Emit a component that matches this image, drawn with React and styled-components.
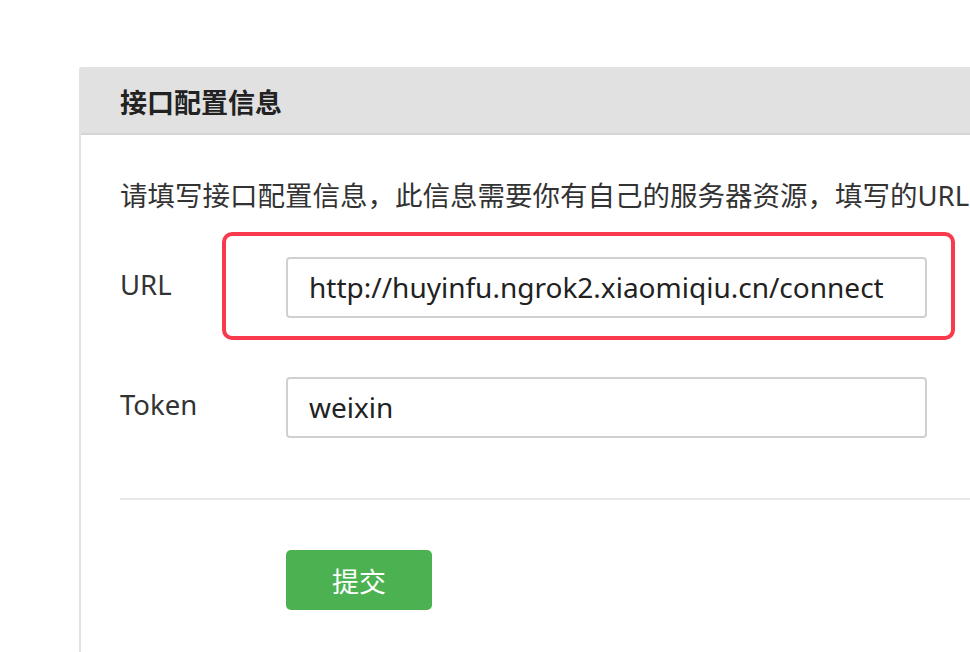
import React from 'react';
import styled, { createGlobalStyle } from 'styled-components';

const GlobalStyle = createGlobalStyle`
  html, body {
    margin: 0;
    padding: 0;
    background: #fff;
    overflow: hidden;
  }
  body {
    font-family: 'Noto Sans', 'Noto Sans CJK SC', sans-serif;
    color: #333;
  }
`;

const Page = styled.div`
  width: 970px;
  height: 652px;
  overflow: hidden;
  padding: 67px 0 0 79px;
  box-sizing: border-box;
`;

const Panel = styled.section`
  width: 1000px;
  height: 700px;
  border: 2px solid #e2e2e2;
  border-radius: 3px 0 0 0;
  box-sizing: border-box;
`;

const Header = styled.header`
  height: 64px;
  background: #e1e1e1;
  border-bottom: 2px solid #d4d4d4;
  display: flex;
  align-items: center;
  padding-left: 39px;
  font-size: 27px;
  font-weight: 700;
  color: #222;
`;

const Body = styled.div`
  padding: 0 0 0 39px;
`;

const Intro = styled.p`
  margin: 0;
  padding-top: 43px;
  font-size: 27.5px;
  line-height: 36px;
  white-space: nowrap;
  color: #333;
`;

const Row = styled.div`
  position: relative;
  display: flex;
  align-items: center;
  margin-top: ${({ Top }) => Top};
`;

const Label = styled.label`
  width: 166px;
  flex: none;
  font-size: 27.5px;
  color: #333;
  padding-bottom: ${({ Lift }) => Lift || '0'};
`;

const Input = styled.input`
  width: 641px;
  height: 61px;
  box-sizing: border-box;
  border: 2px solid #d0d0d0;
  border-radius: 4px;
  padding: 0 0 2px 21px;
  font-family: 'Noto Sans', 'Noto Sans CJK SC', sans-serif;
  font-size: 28px;
  color: #222;
  background: #fff;
  outline: none;
`;

const Highlight = styled.div`
  position: absolute;
  left: 102px;
  top: -25px;
  width: 733px;
  height: 108px;
  border: 4px solid #f93a4c;
  border-radius: 10px;
  box-sizing: border-box;
  pointer-events: none;
`;

const Divider = styled.hr`
  margin: 60px 0 0 0;
  border: 0;
  border-top: 2px solid #e8e8e8;
`;

const Actions = styled.div`
  padding: 50px 0 0 166px;
`;

const SubmitButton = styled.button`
  width: 146px;
  height: 60px;
  border: 0;
  border-radius: 5px;
  background: #4cb251;
  color: #fff;
  font-family: 'Noto Sans CJK SC', sans-serif;
  font-size: 27px;
  cursor: pointer;
`;

export default function App() {
  return (
    <>
      <GlobalStyle />
      <Page>
        <Panel>
          <Header>接口配置信息</Header>
          <Body>
            <Intro>请填写接口配置信息，此信息需要你有自己的服务器资源，填写的URL</Intro>
            <Row Top="43px">
              <Label Lift="6px">URL</Label>
              <Input readOnly value="http://huyinfu.ngrok2.xiaomiqiu.cn/connect" />
              <Highlight />
            </Row>
            <Row Top="59px">
              <Label Lift="6px">Token</Label>
              <Input readOnly value="weixin" />
            </Row>
            <Divider />
            <Actions>
              <SubmitButton>提交</SubmitButton>
            </Actions>
          </Body>
        </Panel>
      </Page>
    </>
  );
}
